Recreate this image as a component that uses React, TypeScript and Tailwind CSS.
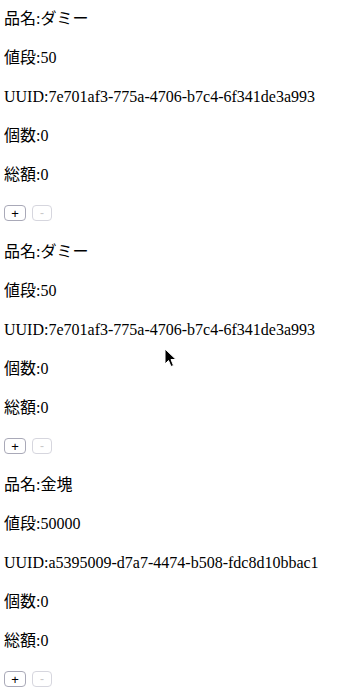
const items = [
  { name: 'ダミー', price: 50, uuid: '7e701af3-775a-4706-b7c4-6f341de3a993' },
  { name: 'ダミー', price: 50, uuid: '7e701af3-775a-4706-b7c4-6f341de3a993' },
  { name: '金塊', price: 50000, uuid: 'a5395009-d7a7-4474-b508-fdc8d10bbac1' },
]

function Item({ name, price, uuid }: { name: string; price: number; uuid: string }) {
  const count = 0
  return (
    <div className="flex flex-col gap-4">
      <p className="leading-[23px]">品名:{name}</p>
      <p className="leading-[23px]">値段:{price}</p>
      <p className="leading-[23px]">UUID:{uuid}</p>
      <p className="leading-[23px]">個数:{count}</p>
      <p className="leading-[23px]">総額:{price * count}</p>
      <div className="flex h-[22px] items-center gap-[6px]">
        <button className="flex h-[16px] w-[22px] items-center justify-center rounded-[4px] border border-[#a9a9b8] bg-white font-['Liberation_Sans',sans-serif] text-[13px] leading-none text-black">
          +
        </button>
        <button
          disabled
          className="flex h-[16px] w-[20px] items-center justify-center rounded-[4px] border border-[#d6d6de] bg-white font-['Liberation_Sans',sans-serif] text-[12px] leading-none text-[#c8c8c8]"
        >
          -
        </button>
      </div>
    </div>
  )
}

export default function App() {
  return (
    <div
      className="relative min-h-[698px] bg-white pl-[4px] pt-[7px] text-[16px] text-black"
      style={{ fontFamily: '"Liberation Serif", "Noto Sans CJK JP", serif' }}
    >
      <div className="flex flex-col gap-4">
        {items.map((it, i) => (
          <Item key={i} {...it} />
        ))}
      </div>
      <svg
        className="absolute left-[164px] top-[348px]"
        width="14"
        height="20"
        viewBox="0 0 14 20"
      >
        <path d="M1 1 L1 16 L4.5 12.5 L7 18.5 L9.5 17.5 L7 11.5 L12 11.5 Z" fill="#000" stroke="#fff" strokeWidth="1" />
      </svg>
    </div>
  )
}
